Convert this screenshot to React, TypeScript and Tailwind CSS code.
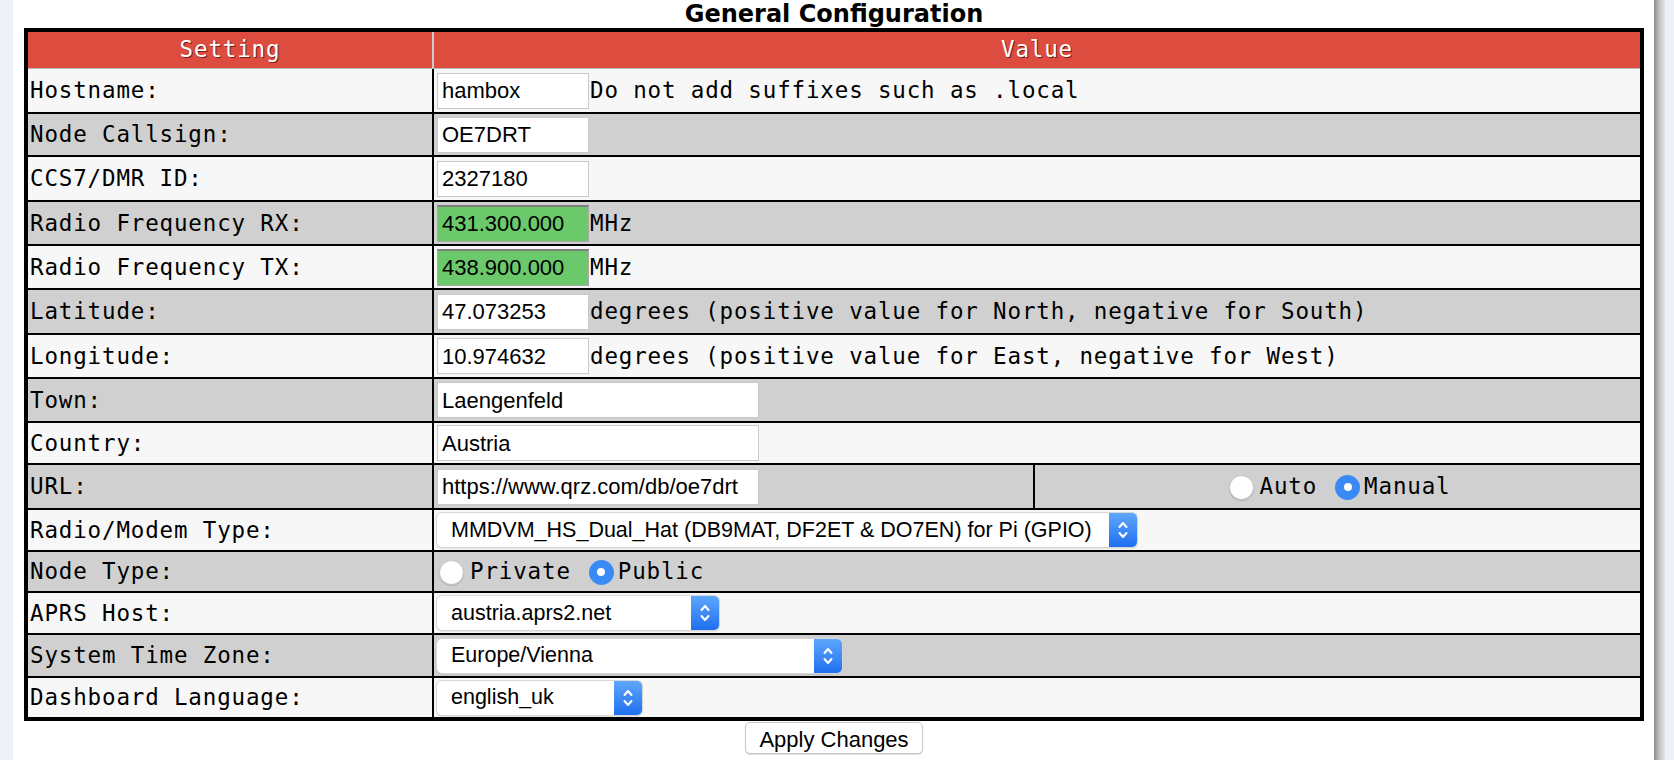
import React from 'react'

const mono = "font-['DejaVu_Sans_Mono',monospace] text-[22.5px] tracking-[0.85px] text-black"
const sans = "font-['Liberation_Sans',Arial,sans-serif] text-[22px] text-black"

function Stepper() {
  return (
    <div className="flex w-[28px] items-center justify-center rounded-r-[5px] bg-gradient-to-b from-[#5ea6fc] to-[#1f6ff0]">
      <svg width="12" height="22" viewBox="0 0 12 22" fill="none" stroke="white" strokeWidth="2" strokeLinecap="round" strokeLinejoin="round">
        <path d="M2.5 8l3.5-4 3.5 4" />
        <path d="M2.5 14l3.5 4 3.5-4" />
      </svg>
    </div>
  )
}

function Select({ value, w }: { value: string; w: string }) {
  return (
    <div className={`flex h-[34px] ${w} rounded-[5px] bg-white shadow-[0_0_0_1px_#d6d6d6,0_1px_2px_rgba(0,0,0,0.25)]`}>
      <span className="flex flex-1 items-center pl-[14px] whitespace-nowrap font-['Liberation_Sans',Arial,sans-serif] text-[21.5px] text-black">
        {value}
      </span>
      <Stepper />
    </div>
  )
}

function TextBox({ value, w, green }: { value: string; w: string; green?: boolean }) {
  return (
    <div
      className={`flex items-center ${w} px-[4px] whitespace-nowrap ${sans} ${
        green
          ? 'h-[37px] bg-[#6bc96b] border border-[#a9a9a9] border-t-2 border-t-[#7f7f7f]'
          : 'h-[36px] bg-white border border-[#c9c9c9]'
      }`}
    >
      {value}
    </div>
  )
}

function Radio({ checked }: { checked?: boolean }) {
  return checked ? (
    <span className="mr-[4px] flex h-[25px] w-[25px] items-center justify-center rounded-full bg-[#3a8af6]">
      <span className="h-[8px] w-[8px] rounded-full bg-white" />
    </span>
  ) : (
    <span className="mr-[6px] h-[25px] w-[25px] rounded-full border border-[#c4c4c4] bg-white shadow-[0_1px_1px_rgba(0,0,0,0.15)]" />
  )
}

interface RowProps {
  label: string
  light: boolean
  h: string
  first?: boolean
  children?: React.ReactNode
}

function Row({ label, light, h, first, children }: RowProps) {
  return (
    <div className={`flex ${h} ${light ? 'bg-[#f7f7f7]' : 'bg-[#d0d0d0]'} ${first ? '' : 'border-t-2 border-black'}`}>
      <div className={`flex w-[404px] items-center pt-[1px] pl-[2px] whitespace-nowrap ${mono}`}>{label}</div>
      <div className="flex flex-1 items-center border-l-2 border-black pl-[3px]">{children}</div>
    </div>
  )
}

export default function App() {
  return (
    <div className="flex h-[760px] w-full overflow-hidden bg-[#edf0f6]">
      <div className="ml-[13px] flex w-[1641px] flex-col bg-white">
        <div className="ml-[11px] h-[28px] w-[1620px] text-center font-['DejaVu_Sans',sans-serif] text-[24px] font-bold leading-[28px] text-black">
          General Configuration
        </div>

        <div className="ml-[11px] w-[1620px] border-4 border-black">
          <div className={`flex h-[37px] border-b border-[#b7b7b7] bg-[#dc4c3f] ${mono}`}>
            <div className="flex w-[404px] items-center justify-center text-white [text-shadow:1px_1px_0_#7a1a12]">Setting</div>
            <div className="w-[2px] bg-[#cdcdcd]" />
            <div className="flex flex-1 items-center justify-center text-white [text-shadow:1px_1px_0_#7a1a12]">Value</div>
          </div>

          <Row label="Hostname:" light first h="h-[43px]">
            <TextBox value="hambox" w="w-[152px]" />
            <span className={`ml-[1px] pt-[1px] ${mono}`}>Do not add suffixes such as .local</span>
          </Row>
          <Row label="Node Callsign:" light={false} h="h-[43px]">
            <TextBox value="OE7DRT" w="w-[152px]" />
          </Row>
          <Row label="CCS7/DMR ID:" light h="h-[45px]">
            <TextBox value="2327180" w="w-[152px]" />
          </Row>
          <Row label="Radio Frequency RX:" light={false} h="h-[44px]">
            <TextBox value="431.300.000" w="w-[152px]" green />
            <span className={`ml-[1px] pt-[1px] ${mono}`}>MHz</span>
          </Row>
          <Row label="Radio Frequency TX:" light h="h-[44px]">
            <TextBox value="438.900.000" w="w-[152px]" green />
            <span className={`ml-[1px] pt-[1px] ${mono}`}>MHz</span>
          </Row>
          <Row label="Latitude:" light={false} h="h-[45px]">
            <TextBox value="47.073253" w="w-[152px]" />
            <span className={`ml-[1px] pt-[1px] ${mono}`}>degrees (positive value for North, negative for South)</span>
          </Row>
          <Row label="Longitude:" light h="h-[44px]">
            <TextBox value="10.974632" w="w-[152px]" />
            <span className={`ml-[1px] pt-[1px] ${mono}`}>degrees (positive value for East, negative for West)</span>
          </Row>
          <Row label="Town:" light={false} h="h-[44px]">
            <TextBox value="Laengenfeld" w="w-[322px]" />
          </Row>
          <Row label="Country:" light h="h-[42px]">
            <TextBox value="Austria" w="w-[322px]" />
          </Row>

          <div className="flex h-[45px] border-t-2 border-black bg-[#d0d0d0]">
            <div className={`flex w-[404px] items-center pt-[1px] pl-[2px] ${mono}`}>URL:</div>
            <div className="flex w-[601px] items-center border-l-2 border-black pl-[3px]">
              <TextBox value="https://www.qrz.com/db/oe7drt" w="w-[322px]" />
            </div>
            <div className={`flex flex-1 items-center justify-center border-l-2 border-black pl-[4px] pt-[1px] ${mono}`}>
              <Radio />
              <span>Auto</span>
              <span className="w-[18px]" />
              <Radio checked />
              <span>Manual</span>
            </div>
          </div>

          <Row label="Radio/Modem Type:" light h="h-[42px]">
            <Select value="MMDVM_HS_Dual_Hat (DB9MAT, DF2ET & DO7EN) for Pi (GPIO)" w="w-[700px]" />
          </Row>
          <Row label="Node Type:" light={false} h="h-[41px]">
            <div className={`flex items-center pl-[2px] pt-[1px] ${mono}`}>
              <Radio />
              <span>Private</span>
              <span className="w-[18px]" />
              <Radio checked />
              <span>Public</span>
            </div>
          </Row>
          <Row label="APRS Host:" light h="h-[42px]">
            <Select value="austria.aprs2.net" w="w-[282px]" />
          </Row>
          <Row label="System Time Zone:" light={false} h="h-[43px]">
            <Select value="Europe/Vienna" w="w-[405px]" />
          </Row>
          <Row label="Dashboard Language:" light h="h-[41px]">
            <Select value="english_uk" w="w-[205px]" />
          </Row>
        </div>

        <div className="ml-[11px] flex w-[1620px] justify-center pt-[1px]">
          <button className={`h-[32px] w-[178px] rounded-[5px] border border-[#c8c8c8] bg-white shadow-[0_1px_1px_rgba(0,0,0,0.15)] ${sans} text-[#222]`}>
            Apply Changes
          </button>
        </div>
      </div>
      <div className="w-[11px] bg-gradient-to-r from-[#8c8c8c] via-[#c4c4c4] to-[#e2e4e8]" />
    </div>
  )
}
